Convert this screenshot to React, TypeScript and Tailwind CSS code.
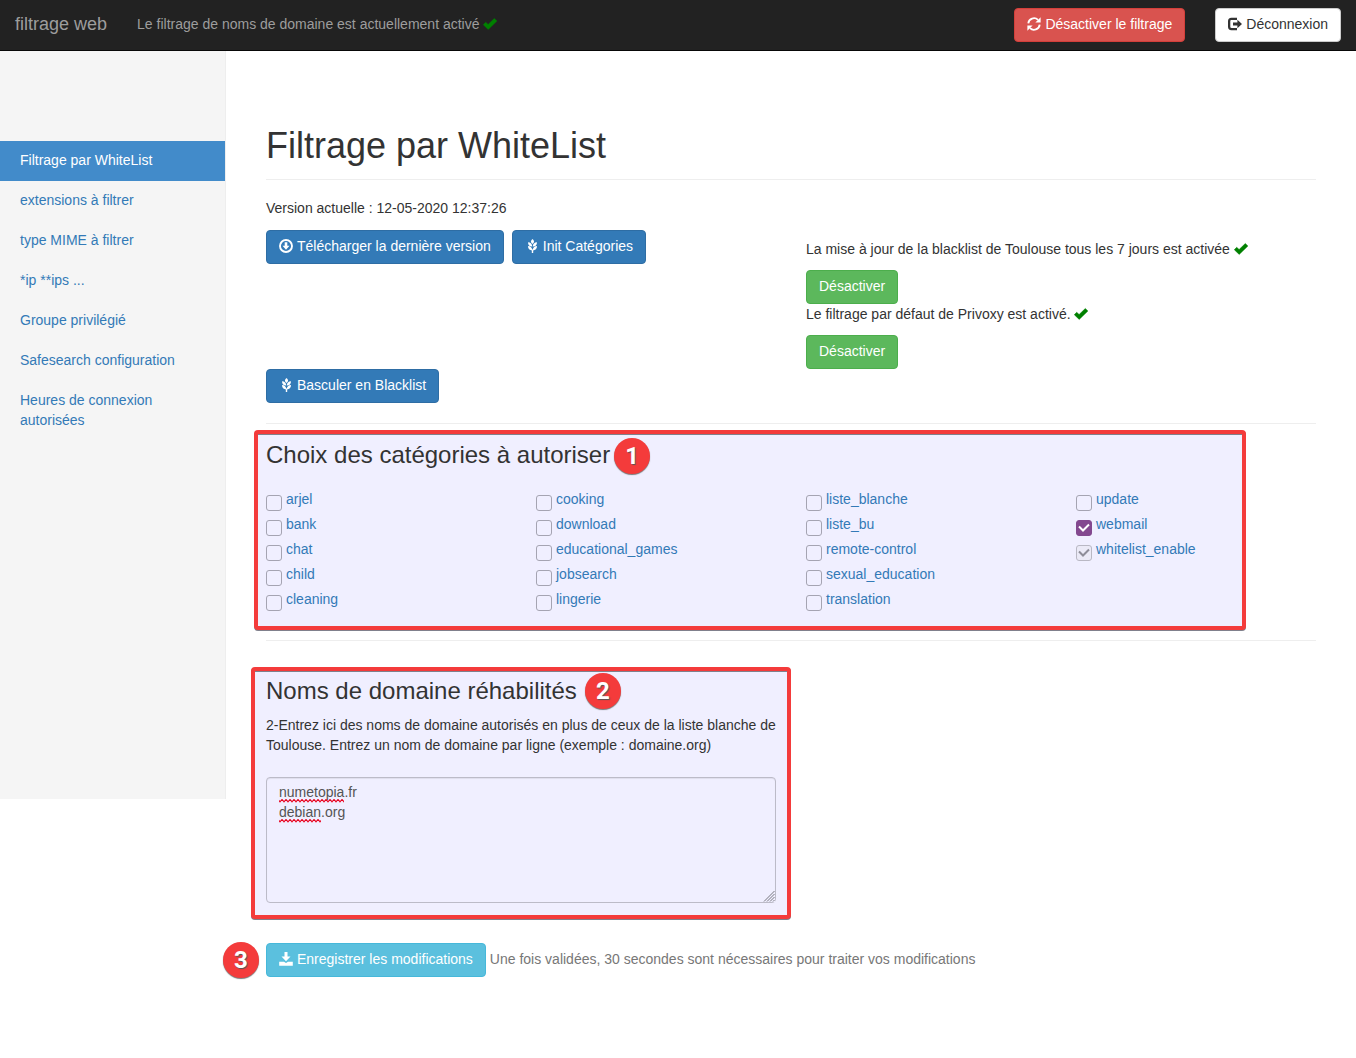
import { ReactNode } from "react";

type IconProps = { className?: string };

function CheckIcon({ className = "" }: IconProps) {
  return (
    <svg viewBox="0 0 14 14" className={`inline-block size-3.5 align-[-2px] text-[#008000] ${className}`} aria-hidden="true">
      <path
        d="M11.3 1.500 13.9 4 5.200 12.400.3 7.700 2.700 5.300 5.100 7.500Z"
        fill="currentColor"
        stroke="currentColor"
        strokeWidth=".5"
        strokeLinejoin="round"
      />
    </svg>
  );
}

function Glyph({ children }: { children: ReactNode }) {
  return (
    <svg viewBox="0 0 14 14" className="mr-1 inline-block size-3.5 align-[-2px]" fill="currentColor" aria-hidden="true">
      {children}
    </svg>
  );
}

function RefreshGlyph() {
  return (
    <Glyph>
      <path d="M1.300 6.300A5.700 5.700 0 0 1 11 2.900" fill="none" stroke="currentColor" strokeWidth="1.800" />
      <path d="M13.600.3V5.500H8.400Z" />
      <path d="M12.700 7.700A5.700 5.700 0 0 1 3 11.100" fill="none" stroke="currentColor" strokeWidth="1.800" />
      <path d="M.4 13.700V8.500H5.600Z" />
    </Glyph>
  );
}

function LogOutGlyph() {
  return (
    <Glyph>
      <path d="M9 .8H3.400C1.200.8 0 2 0 4.200V9.800C0 12 1.200 13.200 3.400 13.200H9V10.900H3.500C2.700 10.900 2.300 10.500 2.300 9.700V4.300C2.300 3.500 2.700 3.100 3.500 3.100H9Z" />
      <path d="M9.400 2.800 14 7 9.400 11.200V8.500H5V5.500H9.400Z" />
    </Glyph>
  );
}

function DownloadCircleGlyph() {
  return (
    <Glyph>
      <circle cx="7" cy="7" r="6" fill="none" stroke="currentColor" strokeWidth="1.900" />
      <path d="M5.700 3.300H8.300V6.700H10.500L7 10.700 3.500 6.700H5.700Z" />
    </Glyph>
  );
}

function GrainGlyph() {
  return (
    <Glyph>
      <path d="M7.500 0C9.500 1.700 9.700 3.200 7.500 5 5.300 3.200 5.500 1.700 7.500 0Z" />
      <path d="M3 3.200C5.600 3.300 7.200 4.800 7.200 7.600 4.400 7.500 3 6 3 3.200Z" />
      <path d="M12 3.200C9.400 3.300 7.800 4.800 7.800 7.600 10.600 7.500 12 6 12 3.200Z" />
      <path d="M3 7.100C5.600 7.200 7.200 8.700 7.200 11.500 4.400 11.400 3 9.900 3 7.100Z" />
      <path d="M12 7.100C9.400 7.200 7.800 8.700 7.800 11.500 10.600 11.400 12 9.900 12 7.100Z" />
      <path d="M6.800 10.400H8.200V14H6.800Z" />
    </Glyph>
  );
}

function SaveGlyph() {
  return (
    <Glyph>
      <path d="M5.500 0H8.500V4.500H11.500L7 9.200 2.500 4.500H5.500Z" />
      <path d="M.2 9.800H5L7 11 9 9.800H13.800V13.800H.2Z" />
    </Glyph>
  );
}

const buttonTones = {
  primary: "border-[#2e6da4] bg-[#337ab7] text-white",
  success: "border-[#4cae4c] bg-[#5cb85c] text-white",
  danger: "border-[#d43f3a] bg-[#d9534f] text-white",
  info: "border-[#46b8da] bg-[#5bc0de] text-white",
  plain: "border-[#ccc] bg-white text-[#333]",
};

function Button({ tone, children }: { tone: keyof typeof buttonTones; children: ReactNode }) {
  return (
    <button
      type="button"
      className={`block cursor-pointer whitespace-nowrap rounded border px-3 pt-[5px] pb-[7px] text-sm leading-5 ${buttonTones[tone]}`}
    >
      {children}
    </button>
  );
}

function StepBadge({ children, className = "" }: { children: ReactNode; className?: string }) {
  return (
    <span
      className={`flex size-9 shrink-0 items-center justify-center rounded-full bg-[#f43b3b] font-[Roboto,sans-serif] text-2xl leading-none font-bold text-white shadow-[0_1px_1px_#777] [text-shadow:1px_1px_1px_#555] ${className}`}
    >
      {children}
    </span>
  );
}

const menu = [
  "Filtrage par WhiteList",
  "extensions à filtrer",
  "type MIME à filtrer",
  "*ip **ips ...",
  "Groupe privilégié",
  "Safesearch configuration",
  "Heures de connexion autorisées",
];

type Category = { name: string; checked?: boolean; disabled?: boolean };

const categories: Category[][] = [
  [{ name: "arjel" }, { name: "bank" }, { name: "chat" }, { name: "child" }, { name: "cleaning" }],
  [{ name: "cooking" }, { name: "download" }, { name: "educational_games" }, { name: "jobsearch" }, { name: "lingerie" }],
  [{ name: "liste_blanche" }, { name: "liste_bu" }, { name: "remote-control" }, { name: "sexual_education" }, { name: "translation" }],
  [{ name: "update" }, { name: "webmail", checked: true }, { name: "whitelist_enable", checked: true, disabled: true }],
];

function CategoryRow({ name, checked, disabled }: Category) {
  return (
    <li className="flex h-[25px] gap-1">
      <span className="mt-1.5 grid size-4 shrink-0">
        <input
          id={name}
          type="checkbox"
          defaultChecked={checked}
          disabled={disabled}
          className="peer col-start-1 row-start-1 size-4 appearance-none rounded-[3px] border border-[#a5a4b2] checked:enabled:border-[#83488f] checked:enabled:bg-[#83488f] disabled:border-[#b9b8c4] disabled:bg-[#ebeaf7]"
        />
        <svg
          viewBox="0 0 16 16"
          className="pointer-events-none invisible col-start-1 row-start-1 size-4 text-white peer-checked:visible peer-disabled:text-[#8e8d99]"
          aria-hidden="true"
        >
          <path d="M3 6.500 7 10.500 13 4.500" fill="none" stroke="currentColor" strokeWidth="2" />
        </svg>
      </span>
      <label htmlFor={name} className="leading-5 text-[#337ab7]">
        {name}
      </label>
    </li>
  );
}

function Squiggle({ className }: { className: string }) {
  return (
    <svg className={`pointer-events-none absolute left-[13px] h-1 ${className}`} aria-hidden="true">
      <defs>
        <pattern id="squiggle" width="4" height="4" patternUnits="userSpaceOnUse">
          <path d="M-1 .5 1 2.800 3 .5 5 2.800" fill="none" stroke="#e8001c" strokeWidth="1.100" />
        </pattern>
      </defs>
      <rect width="100%" height="4" fill="url(#squiggle)" />
    </svg>
  );
}

function ResizeGrip() {
  return (
    <svg
      viewBox="0 0 12 12"
      className="pointer-events-none absolute right-px bottom-px size-3 bg-[#f0efff]"
      fill="none"
      stroke="#77767f"
      aria-hidden="true"
    >
      <path d="M1 11.500 11.500 1M4 11.500 11.500 4M7 11.500 11.500 7M10 11.500 11.500 10" />
    </svg>
  );
}

const panel = "rounded-[4px] border-4 border-[#f43b3b] bg-[#f0efff] shadow-[0_1px_0_#80808c,inset_0_1px_0_#80808c]";

export default function App() {
  return (
    <div className="min-h-screen bg-white font-['Liberation_Sans',Arial,sans-serif] text-sm leading-5 text-[#333]">
      <header className="flex h-[51px] items-start border-b border-[#080808] bg-[#222] px-[15px] pt-2 text-[#9d9d9d]">
        <a href="#" className="pt-1.5 text-lg leading-5">
          filtrage web
        </a>
        <p className="ml-[30px] pt-1.5">
          Le filtrage de noms de domaine est actuellement activé <CheckIcon />
        </p>
        <div className="ml-auto flex gap-[30px]">
          <Button tone="danger">
            <RefreshGlyph />
            Désactiver le filtrage
          </Button>
          <Button tone="plain">
            <LogOutGlyph />
            Déconnexion
          </Button>
        </div>
      </header>

      <div className="flex items-start">
        <nav className="min-h-[748px] w-[226px] shrink-0 border-r border-[#eee] bg-[#f5f5f5] pt-[90px]">
          <ul>
            {menu.map((item, index) => (
              <li key={item}>
                <a
                  href="#"
                  aria-current={index === 0 ? "page" : undefined}
                  className="block px-5 pt-[9px] pb-[11px] text-[#337ab7] aria-[current=page]:bg-[#428bca] aria-[current=page]:text-white"
                >
                  {item}
                </a>
              </li>
            ))}
          </ul>
        </nav>

        <main className="min-w-0 flex-1 px-10 pt-[75px] pb-20">
          <h1 className="border-b border-[#eee] pb-[13px] text-4xl leading-10">Filtrage par WhiteList</h1>

          <p className="mt-[18px]">Version actuelle : 12-05-2020 12:37:26</p>
          <div className="mt-3 grid grid-cols-2 gap-[30px]">
            <div className="flex items-start gap-2">
              <Button tone="primary">
                <DownloadCircleGlyph />
                Télécharger la dernière version
              </Button>
              <Button tone="primary">
                <GrainGlyph />
                Init Catégories
              </Button>
            </div>
            <div className="pt-[9px]">
              <p className="mb-[11px]">
                La mise à jour de la blacklist de Toulouse tous les 7 jours est activée <CheckIcon />
              </p>
              <Button tone="success">Désactiver</Button>
              <p className="mb-[11px]">
                Le filtrage par défaut de Privoxy est activé. <CheckIcon />
              </p>
              <Button tone="success">Désactiver</Button>
            </div>
          </div>
          <Button tone="primary">
            <GrainGlyph />
            Basculer en Blacklist
          </Button>

          <hr className="mt-5 border-[#eee]" />

          <section className={`mt-1.5 -ml-3 mr-[70px] px-2 pt-1 pb-3 ${panel}`}>
            <h2 className="flex items-start gap-1 text-2xl leading-[34px]">
              Choix des catégories à autoriser <StepBadge>1</StepBadge>
            </h2>
            <div className="-mr-28 mt-[15px] grid grid-cols-4">
              {categories.map((column) => (
                <ul key={column[0].name}>
                  {column.map((category) => (
                    <CategoryRow key={category.name} {...category} />
                  ))}
                </ul>
              ))}
            </div>
          </section>

          <hr className="mt-2.5 border-[#eee]" />

          <section className={`mt-[26px] -ml-[15px] w-[calc(50%+15px)] px-[11px] pb-3 ${panel}`}>
            <h2 className="flex items-center gap-2 text-2xl leading-10">
              Noms de domaine réhabilités <StepBadge>2</StepBadge>
            </h2>
            <label htmlFor="domains" className="mt-1 block">
              2-Entrez ici des noms de domaine autorisés en plus de ceux de la liste blanche de Toulouse. Entrez un nom de
              domaine par ligne (exemple : domaine.org)
            </label>
            <div className="relative mt-[22px]">
              <textarea
                id="domains"
                rows={5}
                spellCheck={false}
                defaultValue={"numetopia.fr\ndebian.org"}
                className="block h-[126px] w-full rounded border border-[#bcbbc8] px-3 pt-1 pb-1.5 text-[#555] shadow-[inset_0_1px_1px_rgba(0,0,0,0.075)]"
              />
              <Squiggle className="top-[22px] w-[65px]" />
              <Squiggle className="top-[42px] w-[42px]" />
              <ResizeGrip />
            </div>
          </section>

          <div className="relative mt-6 flex items-start gap-1 text-[#777]">
            <StepBadge className="absolute -left-[43px] -top-px">3</StepBadge>
            <Button tone="info">
              <SaveGlyph />
              Enregistrer les modifications
            </Button>
            <p className="pt-1.5">Une fois validées, 30 secondes sont nécessaires pour traiter vos modifications</p>
          </div>
        </main>
      </div>
    </div>
  );
}
